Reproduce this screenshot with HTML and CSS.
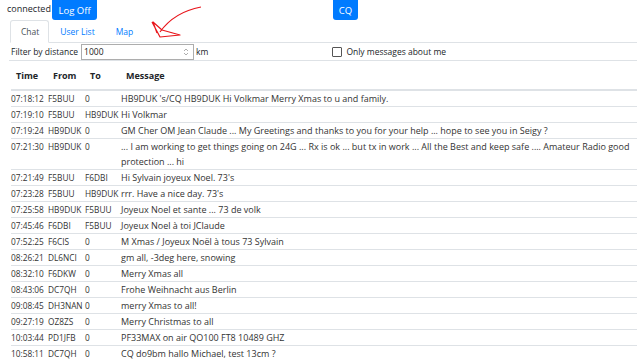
FILE: index.html
```html
<!DOCTYPE html>
<html lang="en">
<head>
    <meta charset="UTF-8">
    <title>Chat</title>
    <link rel="stylesheet" href="styles.css">
</head>
<body>
    <div class="topbar">
        <span class="status">connected</span>
        <button class="btn">Log Off</button>
        <button class="btn btn-cq">CQ</button>
    </div>

    <ul class="tabs">
        <li class="tab active">Chat</li>
        <li class="tab">User List</li>
        <li class="tab">Map</li>
    </ul>

    <div class="filter">
        <label for="distance">Filter by distance</label>
        <span class="num">
            <input type="text" id="distance" value="1000">
            <span class="spin"><svg width="6" height="10" viewBox="0 0 6 10"><path d="M1 4 L3 2 L5 4 M1 6 L3 8 L5 6" fill="none" stroke="#999" stroke-width="0.8"/></svg></span>
        </span>
        <span class="unit">km</span>
        <label class="only"><span class="box"></span>Only messages about me</label>
    </div>

    <table class="messages">
        <colgroup>
            <col class="c-time"><col class="c-from"><col class="c-to"><col>
        </colgroup>
        <thead>
            <tr><th>Time</th><th>From</th><th>To</th><th>Message</th></tr>
        </thead>
        <tbody>
            <tr><td>07:18:12</td><td>F5BUU</td><td>0</td><td>HB9DUK 's/CQ HB9DUK Hi Volkmar Merry Xmas to u and family.</td></tr>
            <tr><td>07:19:10</td><td>F5BUU</td><td>HB9DUK</td><td>Hi Volkmar</td></tr>
            <tr><td>07:19:24</td><td>HB9DUK</td><td>0</td><td>GM Cher OM Jean Claude ... My Greetings and thanks to you for your help ... hope to see you in Seigy ?</td></tr>
            <tr><td>07:21:30</td><td>HB9DUK</td><td>0</td><td>... I am working to get things going on 24G ... Rx is ok ... but tx in work ... All the Best and keep safe .... Amateur Radio good protection ... hi</td></tr>
            <tr><td>07:21:49</td><td>F5BUU</td><td>F6DBI</td><td>Hi Sylvain joyeux Noel. 73's</td></tr>
            <tr><td>07:23:28</td><td>F5BUU</td><td>HB9DUK</td><td>rrr. Have a nice day. 73's</td></tr>
            <tr><td>07:25:58</td><td>HB9DUK</td><td>F5BUU</td><td>Joyeux Noel et sante ... 73 de volk</td></tr>
            <tr><td>07:45:46</td><td>F6DBI</td><td>F5BUU</td><td>Joyeux Noel à toi JClaude</td></tr>
            <tr><td>07:52:25</td><td>F6CIS</td><td>0</td><td>M Xmas / Joyeux Noël à tous 73 Sylvain</td></tr>
            <tr><td>08:26:21</td><td>DL6NCI</td><td>0</td><td>gm all, -3deg here, snowing</td></tr>
            <tr><td>08:32:10</td><td>F6DKW</td><td>0</td><td>Merry Xmas all</td></tr>
            <tr><td>08:43:06</td><td>DC7QH</td><td>0</td><td>Frohe Weihnacht aus Berlin</td></tr>
            <tr><td>09:08:45</td><td>DH3NAN</td><td>0</td><td>merry Xmas to all!</td></tr>
            <tr><td>09:27:19</td><td>OZ8ZS</td><td>0</td><td>Merry Christmas to all</td></tr>
            <tr><td>10:03:44</td><td>PD1JFB</td><td>0</td><td>PF33MAX on air QO100 FT8 10489 GHZ</td></tr>
            <tr><td>10:58:11</td><td>DC7QH</td><td>0</td><td>CQ do9bm hallo Michael, test 13cm ?</td></tr>
        </tbody>
    </table>

    <!-- hand drawn marker pointing at the filter -->
    <svg class="arrow" width="70" height="45" viewBox="0 0 70 45">
        <path d="M61 7 C45 10 30 18 20 32" fill="none" stroke="#e8141a" stroke-width="1.2"/>
        <path d="M12 22 L20 37 L40 35 L22 30 L13 22 L17 33" fill="none" stroke="#e8141a" stroke-width="1.2" stroke-linejoin="round"/>
    </svg>
</body>
</html>
```

FILE: styles.css
```css
body {
    font-family: "Open Sans", sans-serif;
    font-size: 9px;
    color: #212529;
    margin: 0;
    padding: 0 3px 0 9px;
    background: #fff;
    position: relative;
}

.topbar {
    display: flex;
    align-items: flex-start;
    height: 20px;
    margin-left: -2px;
}

.status {
    margin-top: 2px;
    width: 45px;
}

.btn {
    font-family: inherit;
    font-size: 9.5px;
    background-color: #007bff;
    color: #fff;
    border: none;
    border-radius: 0 0 3px 3px;
    height: 20px;
    width: 45px;
    padding: 0;
    cursor: pointer;
}

.btn-cq {
    margin-left: 236px;
    width: 25px;
}

.tabs {
    display: flex;
    list-style: none;
    margin: 0 0 0 1px;
    padding: 0;
    height: 22px;
    border-bottom: 1px solid #dee2e6;
    font-size: 8.5px;
}

.tab {
    color: #007bff;
    padding: 5px 9px 0 10px;
    border: 1px solid transparent;
    border-radius: 3px 3px 0 0;
    margin-bottom: -1px;
}

.tab.active {
    color: #495057;
    border-color: #dee2e6 #dee2e6 #fff;
    background: #fff;
}

.filter {
    display: flex;
    align-items: center;
    height: 17px;
    border-bottom: 1px solid #dee2e6;
    padding-left: 2px;
    font-size: 8.5px;
}

.num {
    position: relative;
    margin-left: 3px;
}

.num input {
    font-family: inherit;
    font-size: 8.5px;
    width: 113px;
    height: 16px;
    box-sizing: border-box;
    border: 1px solid #adadad;
    padding: 0 2px;
    margin: 0;
    color: #222;
}

.spin {
    position: absolute;
    right: 5px;
    top: 3px;
}

.unit {
    margin-left: 2px;
}

.only {
    display: flex;
    align-items: center;
    margin-left: 124px;
}

.box {
    width: 8px;
    height: 8px;
    border: 1px solid #555;
    border-radius: 1px;
    margin-right: 4px;
}

.messages {
    width: calc(100% - 2px);
    margin-left: 2px;
    table-layout: fixed;
    border-collapse: collapse;
    margin-top: 1px;
}

.c-time { width: 37px; }
.c-from { width: 37px; }
.c-to { width: 36px; }

.messages th {
    text-align: left;
    font-weight: bold;
    padding: 7px 0 7px 5px;
    border-bottom: 2px solid #dee2e6;
    white-space: nowrap;
}

.messages td {
    padding: 0;
    line-height: 15px;
    vertical-align: top;
    border-top: 1px solid #dee2e6;
    color: #333;
    white-space: nowrap;
    font-size: 8.3px;
}

.messages td:last-child {
    white-space: normal;
    font-size: 9px;
}

.arrow {
    position: absolute;
    left: 140px;
    top: 0;
}
```
